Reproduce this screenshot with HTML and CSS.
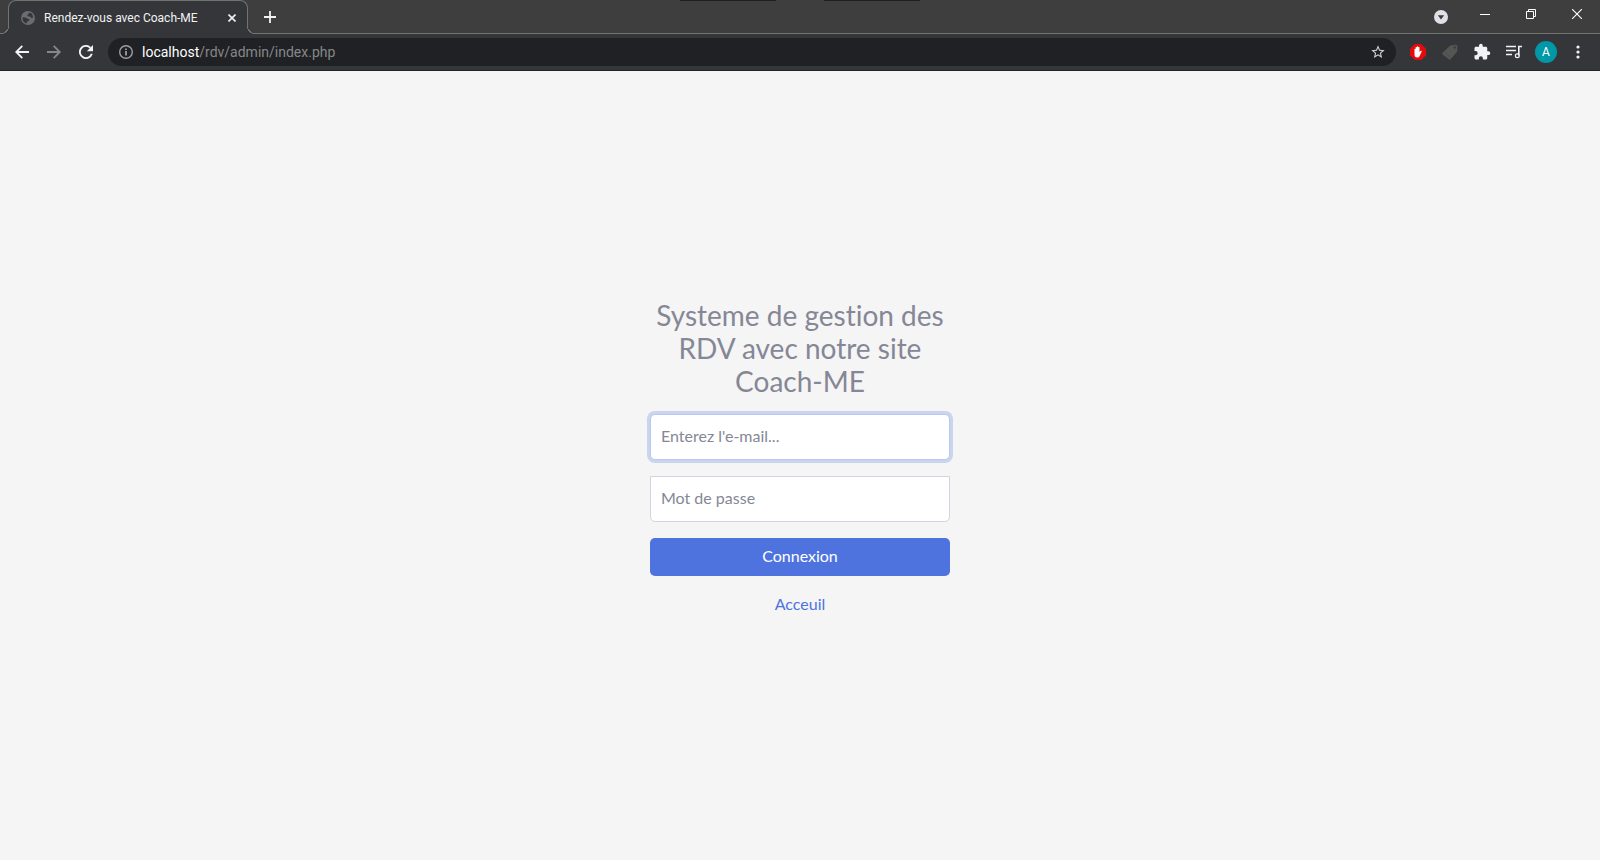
FILE: index.html
```html
<!DOCTYPE html>
<html lang="fr">
<head>
<meta charset="utf-8">
<title>Rendez-vous avec Coach-ME</title>
<link rel="stylesheet" href="styles.css">
</head>
<body>
<header class="browser">
  <div class="tabstrip">
    <div class="tab">
      <svg class="icon" width="14" height="14" viewBox="0 0 14 14"><circle cx="7" cy="7" r="7" fill="#696c70"/><path d="M7.5 1.8 11 2.6 12.2 6.6 10.5 7.2 9.3 5.6 7 5.6 6 4.2 7.5 3.4ZM1.6 6.2 4.5 6.6 6.5 7.8 8.6 8.6 7.6 10 6 10.4 5.6 12.4 3 11.2 1.6 8.6Z" fill="#35363a"/></svg>
      <span class="tab-title">Rendez-vous avec Coach-ME</span>
      <button class="tab-close" aria-label="Fermer l'onglet"><svg class="icon" width="8" height="8" viewBox="0 0 8 8"><path d="M.5.5l7 7M7.5.5l-7 7" stroke="#f1f3f4" stroke-width="1.6"/></svg></button>
    </div>
    <button class="new-tab" aria-label="Nouvel onglet"><svg class="icon" width="12" height="12" viewBox="0 0 12 12"><path d="M6 0v12M0 6h12" stroke="#f1f3f4" stroke-width="1.8"/></svg></button>
    <div class="window-controls">
      <button class="search-tabs" aria-label="Rechercher des onglets"><svg class="icon" width="14" height="14" viewBox="0 0 14 14"><circle cx="7" cy="7" r="7" fill="#dee1e6"/><path d="M3.8 5.2h6.4L7 9.4z" fill="#3c3c3c"/></svg></button>
      <button class="window-button" aria-label="Réduire"><svg class="icon" width="10" height="10" viewBox="0 0 10 10"><path d="M0 5.5h10" stroke="#fff"/></svg></button>
      <button class="window-button" aria-label="Restaurer"><svg class="icon" width="10" height="10" viewBox="0 0 10 10" fill="none" stroke="#fff"><path d="M.5 2.5h7v7h-7zM2.5 2V.5h7v7H8"/></svg></button>
      <button class="window-button" aria-label="Fermer"><svg class="icon" width="10" height="10" viewBox="0 0 10 10"><path d="M0 0l10 10M10 0L0 10" stroke="#fff" stroke-width="1.1"/></svg></button>
    </div>
    <span class="edge-mark edge-mark-left"></span>
    <span class="edge-mark edge-mark-right"></span>
  </div>
  <div class="toolbar">
    <button class="tool" aria-label="Précédent"><svg class="icon" width="14" height="14" viewBox="0 0 14 14"><path d="M14 7H1.5M7.3.8 1.2 7l6.1 6.2" fill="none" stroke="#f1f3f4" stroke-width="1.8"/></svg></button>
    <button class="tool" aria-label="Suivant"><svg class="icon" width="14" height="14" viewBox="0 0 14 14"><path d="M0 7h12.5M6.7.8 12.8 7l-6.1 6.2" fill="none" stroke="#85878a" stroke-width="1.8"/></svg></button>
    <button class="tool" aria-label="Actualiser"><svg class="icon" width="14" height="14" viewBox="0 0 14 14"><path d="M12.8 8.8A6.1 6.1 0 1 1 11.4 2.8" fill="none" stroke="#f1f3f4" stroke-width="1.9"/><path d="M14 0v6.2H7.8z" fill="#f1f3f4"/></svg></button>
    <div class="omnibox">
      <svg class="icon" width="14" height="14" viewBox="0 0 14 14"><circle cx="7" cy="7" r="6.3" fill="none" stroke="#9aa0a6" stroke-width="1.4"/><path d="M7 6v4.5M7 3.4v1.5" stroke="#b4b7ba" stroke-width="1.5"/></svg>
      <span class="url"><span class="host">localhost</span>/rdv/admin/index.php</span>
      <button class="bookmark" aria-label="Ajouter aux favoris"><svg class="icon" width="16" height="16" viewBox="0 0 24 24"><path d="M22 9.24l-7.19-.62L12 2 9.19 8.63 2 9.24l5.46 4.73L5.82 21 12 17.27 18.18 21l-1.63-7.03zM12 15.4l-3.76 2.27 1-4.28-3.32-2.88 4.38-.38L12 6.1l1.71 4.04 4.38.38-3.32 2.88 1 4.28z" fill="#d2d4d7"/></svg></button>
    </div>
    <button class="tool" aria-label="AdBlock"><svg class="icon" width="16" height="16" viewBox="0 0 16 16"><path d="M4.7 0h6.6L16 4.7v6.6L11.3 16H4.7L0 11.3V4.7z" fill="#e30b0b"/><path d="M4.5 8.500V5q.5-.7 1.100 0V3.300q.6-.8 1.200 0v-.6q.7-.8 1.400 0v.6q.7-.7 1.300 0v4.700l1.300-1.200q1-.4 1 .5l-2.100 4.600q-.7 1.500-2.400 1.500-2.800 0-2.800-2.700z" fill="#fff"/></svg></button>
    <button class="tool" aria-label="Étiquettes"><svg class="icon" width="16" height="16" viewBox="0 0 16 16"><path d="M8.2 1.600 14 .4l1.500 1.300-.3 6.100-6.700 7.500q-.9.7-1.700 0L.6 10.500q-.8-.8 0-1.700z" fill="#555654"/><path d="M3 8.200 8.600 13.400M11 1l2.200.5.5 4.800" fill="none" stroke="#4b4c4d" stroke-width=".7"/><circle cx="12.500" cy="3.500" r="1" fill="#35363a"/></svg></button>
    <button class="tool" aria-label="Extensions"><svg class="icon" width="18" height="18" viewBox="0 0 24 24"><path d="M20.500 11H19V7c0-1.100-.9-2-2-2h-4V3.500a2.500 2.500 0 0 0-5 0V5H4c-1.100 0-2 .9-2 2v3.800h1.500c1.500 0 2.700 1.200 2.700 2.700S5 16.200 3.500 16.200H2V20c0 1.100.9 2 2 2h3.800v-1.500c0-1.500 1.200-2.700 2.700-2.700s2.700 1.200 2.700 2.700V22H17c1.100 0 2-.9 2-2v-4h1.500a2.500 2.500 0 0 0 0-5z" fill="#f1f3f4"/></svg></button>
    <button class="tool" aria-label="Contrôle multimédia"><svg class="icon" width="16" height="14" viewBox="0 0 16 14"><path d="M0 1.500h10M0 5.500h10M0 9.500h6M12.800 10.500v-9H16" fill="none" stroke="#f1f3f4" stroke-width="1.600"/><circle cx="11.300" cy="10.700" r="1.900" fill="none" stroke="#f1f3f4" stroke-width="1.200"/></svg></button>
    <button class="tool" aria-label="Profil"><span class="avatar">A</span></button>
    <button class="tool" aria-label="Menu"><svg class="icon" width="4" height="14" viewBox="0 0 4 14" fill="#f1f3f4"><circle cx="2" cy="2" r="1.600"/><circle cx="2" cy="7" r="1.600"/><circle cx="2" cy="12" r="1.600"/></svg></button>
  </div>
</header>
<main class="page">
  <form class="login">
    <h1 class="login-title">Systeme de gestion des RDV avec notre site Coach-ME</h1>
    <input class="field field-active" type="email" placeholder="Enterez l'e-mail..." aria-label="E-mail">
    <input class="field field-last" type="password" placeholder="Mot de passe" aria-label="Mot de passe">
    <button class="submit" type="submit">Connexion</button>
    <a class="home-link" href="#">Acceuil</a>
  </form>
</main>
</body>
</html>
```
FILE: styles.css
```css
* { box-sizing: border-box; }
body {
  margin: 0;
  min-height: 100vh;
  display: flex;
  flex-direction: column;
  background: #f5f5f5;
  color: #858796;
  font: 16px/24px Lato, sans-serif;
  font-variant-ligatures: none;
}
button {
  margin: 0;
  padding: 0;
  border: 0;
  background: none;
  font: inherit;
  color: inherit;
}
.icon { display: block; flex: none; }

.browser {
  background: #35363a;
  border-bottom: 1px solid #242427;
  font-family: Roboto, sans-serif;
}
.tabstrip {
  position: relative;
  display: flex;
  height: 34px;
  padding-left: 8px;
  background: #3e3e3e;
  border-bottom: 1px solid #70736f;
}
.tab {
  position: relative;
  display: flex;
  align-items: center;
  gap: 9px;
  width: 240px;
  height: 34px;
  padding: 0 8px 0 12px;
  background: #35363a;
  border: 1px solid #70736f;
  border-bottom: 0;
  border-radius: 8px 8px 0 0;
}
/* Flared feet that join the tab to the toolbar */
.tab::before,
.tab::after {
  content: "";
  position: absolute;
  bottom: 0;
  width: 8px;
  height: 8px;
}
.tab::before {
  left: -8px;
  background: radial-gradient(circle at 0 0, #3e3e3e 7px, #70736f 7px, #70736f 8px, #35363a 8px);
}
.tab::after {
  right: -8px;
  background: radial-gradient(circle at 100% 0, #3e3e3e 7px, #70736f 7px, #70736f 8px, #35363a 8px);
}
.tab-title { flex: 1; white-space: nowrap; font-size: 12px; color: #f1f3f4; }
.tab-close { width: 14px; display: grid; place-items: center; }
.new-tab { width: 44px; display: grid; place-items: center; }
.window-controls { display: flex; margin-left: auto; height: 28px; }
.search-tabs { width: 42px; padding-top: 6px; display: grid; place-items: center; }
.window-button { width: 46px; display: grid; place-items: center; }
.edge-mark {
  position: absolute;
  top: 0;
  width: 6%;
  height: 1px;
  background: #1f1f1f;
}
.edge-mark-left { left: 42.5%; }
.edge-mark-right { left: 51.5%; }

.toolbar {
  display: flex;
  align-items: center;
  height: 36px;
  padding: 0 6px;
}
.tool { width: 32px; height: 32px; display: grid; place-items: center; }
.omnibox {
  flex: 1;
  display: flex;
  align-items: center;
  gap: 9px;
  height: 28px;
  margin: 0 6px;
  padding: 0 10px 0 11px;
  border-radius: 14px;
  background: #202124;
}
.url { flex: 1; font-size: 14px; line-height: 20px; color: #85888b; }
.host { color: #fff; }
.avatar {
  width: 22px;
  height: 22px;
  border-radius: 50%;
  background: #0097a7;
  color: #fff;
  font-size: 12px;
  line-height: 22px;
  text-align: center;
}

.page { flex: 1; display: flex; align-items: center; justify-content: center; }
.login {
  display: flex;
  flex-direction: column;
  gap: 16px;
  width: 330px;
  padding: 0 15px 16px;
  text-align: center;
}
.login-title { margin: 0; font-size: 28px; font-weight: 400; line-height: 33px; }
.field {
  width: 100%;
  height: 46px;
  padding: 8px 10px 12px;
  border: 1px solid #d1d3e2;
  border-radius: 5px;
  background: #fff;
  color: #6e707e;
  font: inherit;
}
.field::placeholder { color: #858796; opacity: 1; }
.field-active { border-color: #bac8f3; box-shadow: 0 0 0 3px rgba(78, 115, 223, .25); }
.field-last { border-radius: 0 0 5px 5px; }
.submit {
  height: 38px;
  padding-bottom: 2px;
  border-radius: 5px;
  background: #4e73df;
  color: #fff;
}
.home-link { align-self: center; color: #4e73df; text-decoration: none; }
```
